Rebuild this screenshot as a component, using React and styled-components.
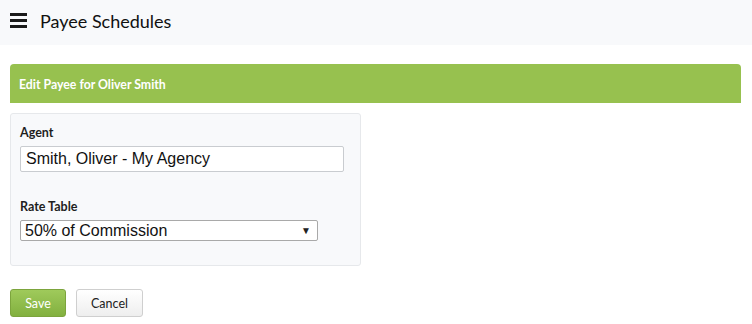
import React from "react";
import styled, { createGlobalStyle } from "styled-components";

const GlobalStyle = createGlobalStyle`
  html, body {
    margin: 0;
    padding: 0;
    background: #ffffff;
    font-family: "Lato", "Open Sans", sans-serif;
    color: #222;
  }
  * {
    box-sizing: border-box;
  }
`;

const Page = styled.div`
  width: 752px;
  min-height: 324px;
  display: flex;
  flex-direction: column;
`;

const TopBar = styled.header`
  height: 45px;
  background: #f8f9fb;
  display: flex;
  align-items: center;
  padding: 0 0 0 10px;
  gap: 13px;
`;

const MenuIcon = styled.div`
  width: 17px;
  display: flex;
  flex-direction: column;
  gap: 3.5px;
  margin-top: -4px;

  span {
    display: block;
    height: 2.5px;
    background: #1a1a1a;
  }
`;

const PageTitle = styled.h1`
  margin: 0;
  font-size: 18px;
  font-weight: 400;
  color: #111;
  margin-top: -3px;
`;

const Content = styled.main`
  padding: 19px 11px 0 10px;
  display: flex;
  flex-direction: column;
`;

const Banner = styled.div`
  height: 39px;
  background: #97c14f;
  border-radius: 4px 4px 0 0;
  color: #fff;
  font-size: 12.3px;
  font-weight: 700;
  display: flex;
  align-items: center;
  padding: 2px 0 0 9px;
`;

const FormPanel = styled.section`
  width: 351px;
  margin-top: 10px;
  background: #f8f9fb;
  border: 1px solid #e6e8eb;
  border-radius: 3px;
  padding: 11px 16px 24px 9px;
  display: flex;
  flex-direction: column;
`;

const Field = styled.div`
  display: flex;
  flex-direction: column;
  margin-bottom: ${(p) => (p.last ? "0" : "27px")};
`;

const Label = styled.label`
  font-size: 12.5px;
  font-weight: 700;
  color: #1e1e1e;
  margin-bottom: 5px;
  line-height: 16px;
`;

const TextInput = styled.input`
  width: 324px;
  height: 26px;
  border: 1px solid #c9ccd0;
  border-radius: 2px;
  background: #fff;
  font-family: "Liberation Sans", Arial, sans-serif;
  font-size: 16px;
  color: #111;
  padding: 0 5px;
  outline: none;
`;

const SelectBox = styled.div`
  width: 298px;
  height: 21px;
  border: 1px solid #a9a9a9;
  border-radius: 2px;
  background: #fff;
  font-family: "Liberation Sans", Arial, sans-serif;
  font-size: 16px;
  color: #111;
  display: flex;
  align-items: center;
  justify-content: space-between;
  padding: 0 6px 0 4px;
`;

const Caret = styled.span`
  font-size: 10px;
  color: #222;
`;

const Actions = styled.div`
  display: flex;
  gap: 10px;
  margin-top: 23px;
`;

const Button = styled.button`
  height: 28px;
  padding: 0 14px;
  border-radius: 3px;
  font-family: "Lato", "Open Sans", sans-serif;
  font-size: 12.5px;
  font-weight: 400;
  cursor: pointer;
  border: 1px solid ${(p) => (p.primary ? "#7ca43d" : "#cfcfcf")};
  background: ${(p) =>
    p.primary
      ? "linear-gradient(#9fca5b, #82b03f)"
      : "linear-gradient(#ffffff, #eeeeee)"};
  color: ${(p) => (p.primary ? "#ffffff" : "#222")};
  min-width: ${(p) => (p.primary ? "56px" : "66px")};
`;

export default function App() {
  return (
    <Page>
      <GlobalStyle />
      <TopBar>
        <MenuIcon>
          <span />
          <span />
          <span />
        </MenuIcon>
        <PageTitle>Payee Schedules</PageTitle>
      </TopBar>
      <Content>
        <Banner>Edit Payee for Oliver Smith</Banner>
        <FormPanel>
          <Field>
            <Label>Agent</Label>
            <TextInput defaultValue="Smith, Oliver - My Agency" />
          </Field>
          <Field last>
            <Label>Rate Table</Label>
            <SelectBox>
              <span>50% of Commission</span>
              <Caret>▼</Caret>
            </SelectBox>
          </Field>
        </FormPanel>
        <Actions>
          <Button primary>Save</Button>
          <Button>Cancel</Button>
        </Actions>
      </Content>
    </Page>
  );
}
